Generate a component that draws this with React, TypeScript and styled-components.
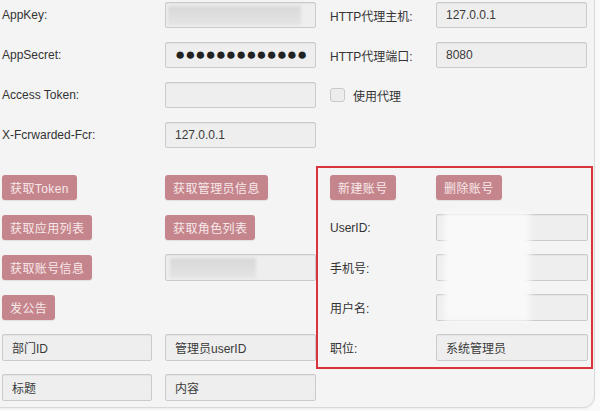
import React from "react";
import styled, { createGlobalStyle } from "styled-components";

const Global = createGlobalStyle`
  html, body { margin: 0; padding: 0; background: #fafafa; overflow: hidden; }
  body { font-family: "Liberation Sans", "Noto Sans CJK SC", sans-serif; }
  #root { width: 600px; height: 411px; overflow: hidden; }
`;

const Panel = styled.div`
  margin: -10px 0 0 -10px;
  padding: 11px 0 7px 11px;
  background: #f4f4f4;
  border: 1px solid #d9d9d9;
  border-radius: 12px;
  box-shadow: 0 1px 2px rgba(0,0,0,0.06);
  display: flex;
  flex-direction: column;
  gap: 26px;
  width: 605px;
  height: 418px;
  box-sizing: border-box;
`;

const Top = styled.div`
  display: flex;
  gap: 14px;
`;

const Column = styled.div`
  display: flex;
  flex-direction: column;
  gap: 14px;
`;

const FieldRow = styled.div<{ $label: number }>`
  display: grid;
  grid-template-columns: ${(p) => p.$label}px 151px;
  align-items: center;
  height: 26px;
`;

const Label = styled.span`
  font-size: 12px;
  color: #333;
  white-space: nowrap;
`;

const Field = styled.div<{ $w?: number; $h?: number }>`
  position: relative;
  box-sizing: border-box;
  width: ${(p) => p.$w ?? 151}px;
  height: ${(p) => p.$h ?? 27}px;
  background: #eeeeee;
  border: 1px solid #cbcbcb;
  border-radius: 2px;
  box-shadow: inset 0 1px 1px rgba(0,0,0,0.05);
  font-size: 12px;
  color: #3a3a3a;
  display: flex;
  align-items: center;
  padding-left: 9px;
  overflow: hidden;
`;

const Dots = styled.span`
  font-size: 17px;
  letter-spacing: -0.1px;
  color: #222;
`;

const Smudge = styled.span<{ $l: number; $w: number }>`
  position: absolute;
  left: ${(p) => p.$l}px;
  top: 3px;
  bottom: 2px;
  width: ${(p) => p.$w}px;
  background: linear-gradient(180deg, #d8d8d8, #e4e4e4);
  filter: blur(1.5px);
`;

const Check = styled.span`
  width: 15px;
  height: 14px;
  border: 1px solid #c9c9c9;
  border-radius: 3px;
  background: #ececec;
  box-sizing: border-box;
`;

const CheckRow = styled.div`
  display: flex;
  align-items: center;
  gap: 8px;
  height: 26px;
`;

const Bottom = styled.div`
  display: flex;
  align-items: flex-start;
  margin-top: -8px;
`;

const Grid = styled.div`
  display: grid;
  grid-template-columns: 163px 151px;
  grid-auto-rows: 27px;
  row-gap: 13px;
  align-items: center;
  padding-top: 8px;
`;

const Button = styled.div`
  justify-self: start;
  height: 25px;
  box-sizing: border-box;
  padding: 0 8px;
  display: flex;
  align-items: center;
  background: #c5858c;
  color: #f7e8ea;
  font-size: 12px;
  letter-spacing: 0.4px;
  border-radius: 3px;
  box-shadow: 0 1px 1px rgba(0,0,0,0.08);
  white-space: nowrap;
`;

const RedBox = styled.div`
  position: relative;
  width: 277px;
  box-sizing: border-box;
  border: 2px solid #d9343c;
  padding: 6px 4px 6px 12px;
  display: grid;
  grid-template-columns: 106px 152px;
  grid-auto-rows: 27px;
  row-gap: 13px;
  align-items: center;
`;

const Blur = styled.div`
  position: absolute;
  left: 126px;
  top: 44px;
  width: 86px;
  height: 110px;
  background: #f9f9f9;
  filter: blur(3px);
`;

const Empty = styled.span``;

export default function App() {
  return (
    <>
      <Global />
      <Panel>
        <Top>
          <Column>
            <FieldRow $label={163}>
              <Label>AppKey:</Label>
              <Field $h={26}>
                <Smudge $l={2} $w={133} />
              </Field>
            </FieldRow>
            <FieldRow $label={163}>
              <Label>AppSecret:</Label>
              <Field $h={26}>
                <Dots>●●●●●●●●●●●●●</Dots>
              </Field>
            </FieldRow>
            <FieldRow $label={163}>
              <Label>Access Token:</Label>
              <Field $h={26} />
            </FieldRow>
            <FieldRow $label={163}>
              <Label>X-Fcrwarded-Fcr:</Label>
              <Field $h={26}>127.0.0.1</Field>
            </FieldRow>
          </Column>
          <Column>
            <FieldRow $label={106}>
              <Label>HTTP代理主机:</Label>
              <Field $h={26}>127.0.0.1</Field>
            </FieldRow>
            <FieldRow $label={106}>
              <Label>HTTP代理端口:</Label>
              <Field $h={26}>8080</Field>
            </FieldRow>
            <CheckRow>
              <Check />
              <Label>使用代理</Label>
            </CheckRow>
          </Column>
        </Top>
        <Bottom>
          <Grid>
            <Button>获取Token</Button>
            <Button>获取管理员信息</Button>
            <Button>获取应用列表</Button>
            <Button>获取角色列表</Button>
            <Button>获取账号信息</Button>
            <Field>
              <Smudge $l={4} $w={86} />
            </Field>
            <Button>发公告</Button>
            <Empty />
            <Field $w={150}>部门ID</Field>
            <Field>管理员userID</Field>
            <Field $w={150}>标题</Field>
            <Field>内容</Field>
          </Grid>
          <RedBox>
            <Button>新建账号</Button>
            <Button>删除账号</Button>
            <Label>UserID:</Label>
            <Field $w={152} />
            <Label>手机号:</Label>
            <Field $w={152} />
            <Label>用户名:</Label>
            <Field $w={152} />
            <Label>职位:</Label>
            <Field $w={152}>系统管理员</Field>
            <Blur />
          </RedBox>
        </Bottom>
      </Panel>
    </>
  );
}
